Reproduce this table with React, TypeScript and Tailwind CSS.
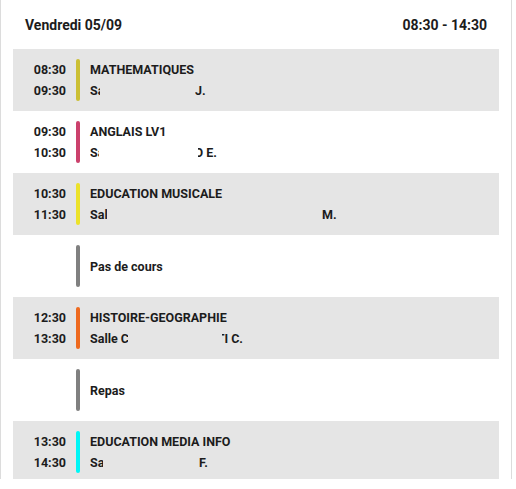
// Day schedule card: one day's lessons, alternating grey / white rows.

type Lesson = {
  start?: string;
  end?: string;
  title: string;
  color: string;
  // room text is partly masked in the source: head shown, then a gap, then tail
  roomHead?: string;
  headWidth?: number;
  roomTail?: string;
  tailStart?: number;
  tailWidth?: number; // set only when the tail's first glyph is cut on the left
  shaded: boolean;
};

const lessons: Lesson[] = [
  {
    start: "08:30",
    end: "09:30",
    title: "MATHEMATIQUES",
    color: "bg-[#cbbf34]",
    roomHead: "Salle",
    headWidth: 10,
    roomTail: "J.",
    tailStart: 105,
    shaded: true,
  },
  {
    start: "09:30",
    end: "10:30",
    title: "ANGLAIS LV1",
    color: "bg-[#cb416c]",
    roomHead: "Salle",
    headWidth: 9,
    roomTail: "O E.",
    tailStart: 108,
    tailWidth: 19,
    shaded: false,
  },
  {
    start: "10:30",
    end: "11:30",
    title: "EDUCATION MUSICALE",
    color: "bg-[#ece22a]",
    roomHead: "Salle",
    headWidth: 17,
    roomTail: "M.",
    tailStart: 232,
    shaded: true,
  },
  { title: "Pas de cours", color: "bg-[#808080]", shaded: false },
  {
    start: "12:30",
    end: "13:30",
    title: "HISTOIRE-GEOGRAPHIE",
    color: "bg-[#ee6a1f]",
    roomHead: "Salle C",
    headWidth: 38,
    roomTail: "TI C.",
    tailStart: 132,
    tailWidth: 21,
    shaded: true,
  },
  { title: "Repas", color: "bg-[#808080]", shaded: false },
  {
    start: "13:30",
    end: "14:30",
    title: "EDUCATION MEDIA INFO",
    color: "bg-[#00f6f6]",
    roomHead: "Salle",
    headWidth: 13,
    roomTail: "F.",
    tailStart: 109,
    shaded: true,
  },
];

function LessonRow({ lesson }: { lesson: Lesson }) {
  const hasTimes = Boolean(lesson.start);

  return (
    <div
      className={`flex h-[62px] items-center ${lesson.shaded ? "bg-[#e5e5e5]" : "bg-white"}`}
    >
      {/* Times */}
      <div className="flex w-[53px] flex-col items-end text-[12.5px] leading-[21px] font-bold">
        {hasTimes && (
          <>
            <span>{lesson.start}</span>
            <span>{lesson.end}</span>
          </>
        )}
      </div>

      {/* Colour bar */}
      <div className={`ml-[10px] h-[42px] w-[4px] rounded-full ${lesson.color}`} />

      {/* Details */}
      <div className="ml-[10px] flex flex-col text-[12.5px] leading-[21px] font-bold">
        <span>{lesson.title}</span>
        {lesson.roomHead && (
          <div className="flex">
            <span
              className="overflow-hidden whitespace-nowrap"
              style={{ width: lesson.headWidth }}
            >
              {lesson.roomHead}
            </span>
            <span
              className="flex justify-end overflow-hidden whitespace-nowrap"
              style={{
                marginLeft: (lesson.tailStart ?? 0) - (lesson.headWidth ?? 0),
                width: lesson.tailWidth,
              }}
            >
              {lesson.roomTail}
            </span>
          </div>
        )}
      </div>
    </div>
  );
}

export default function App() {
  return (
    <div className="h-[489px] w-[516px] bg-white font-['Roboto',sans-serif] text-[#1c1c1c]">
      <div className="mt-[-10px] w-[512px] rounded-b-[6px] border border-[#dcdcdc] bg-white px-[12px] pt-[10px] pb-[4px]">
        {/* Header */}
        <div className="flex h-[48px] items-center justify-between px-[12px] text-[14px] font-bold">
          <span>Vendredi 05/09</span>
          <span>08:30 - 14:30</span>
        </div>

        {lessons.map((lesson) => (
          <LessonRow key={lesson.title} lesson={lesson} />
        ))}
      </div>
    </div>
  );
}
